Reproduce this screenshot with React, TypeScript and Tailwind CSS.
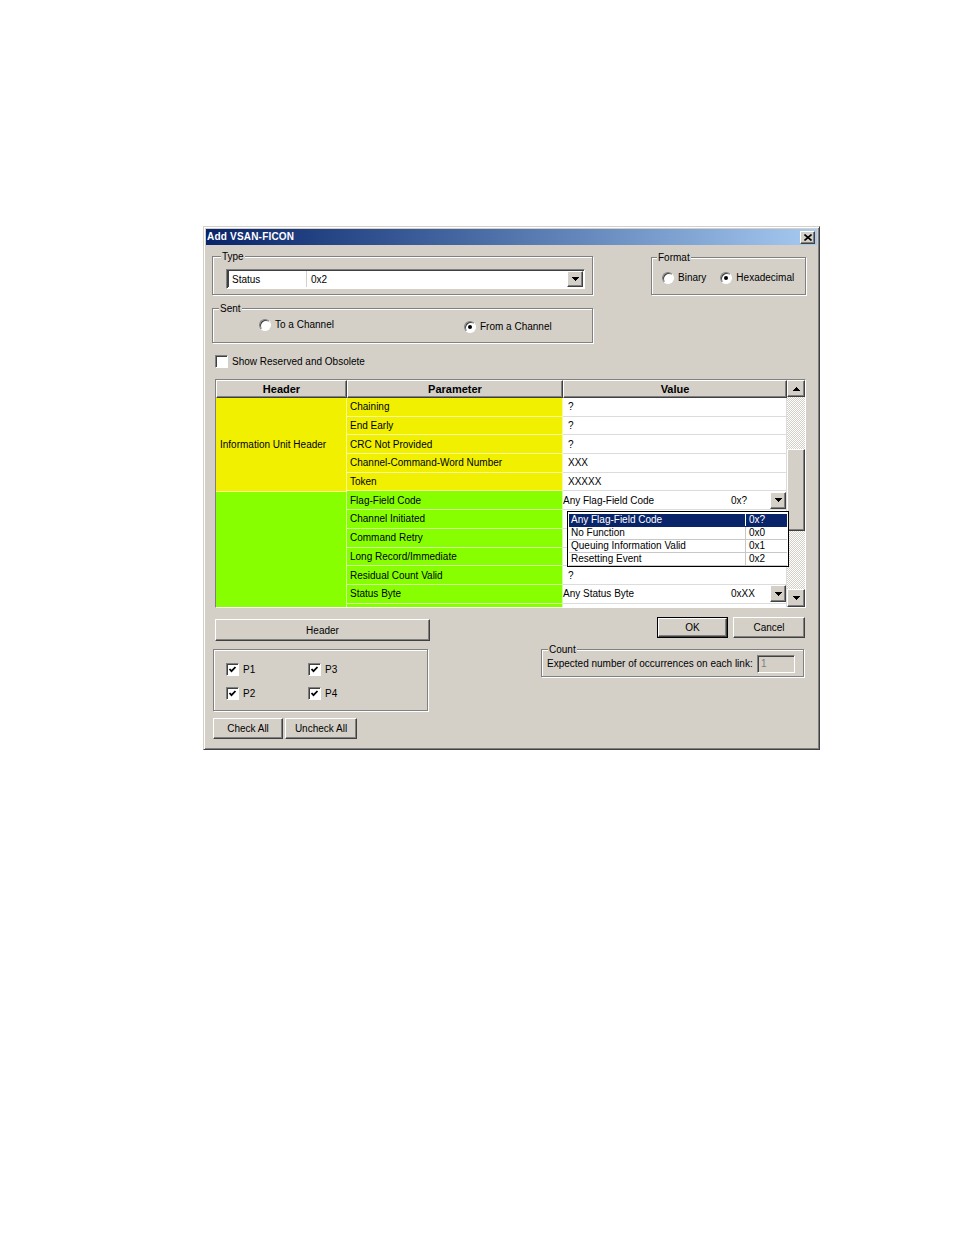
import React from "react";

const raised =
  "border border-t-white border-l-white border-r-[#404040] border-b-[#404040] shadow-[inset_-1px_-1px_0_#808080] bg-[#d4d0c8]";
const sunken =
  "border border-t-[#808080] border-l-[#808080] border-r-white border-b-white shadow-[inset_1px_1px_0_#404040]";

function Down() {
  return (
    <svg width="7" height="4" viewBox="0 0 7 4" shapeRendering="crispEdges">
      <path d="M0 0H7V1H6V2H5V3H4V4H3V3H2V2H1V1H0Z" fill="black" />
    </svg>
  );
}
function Up() {
  return (
    <svg width="7" height="4" viewBox="0 0 7 4" shapeRendering="crispEdges">
      <path d="M3 0H4V1H5V2H6V3H7V4H0V3H1V2H2V1H3Z" fill="black" />
    </svg>
  );
}

function Group({
  label,
  labelLeft,
  className,
  children,
}: {
  label: string;
  labelLeft: string;
  className: string;
  children?: React.ReactNode;
}) {
  return (
    <div
      className={`relative border border-[#808080] shadow-[1px_1px_0_#fff,inset_1px_1px_0_#fff] ${className}`}
    >
      <span
        className={`absolute -top-[7px] ${labelLeft} bg-[#d4d0c8] px-[1px] leading-[13px]`}
      >
        {label}
      </span>
      {children}
    </div>
  );
}

function Radio({ checked, label }: { checked?: boolean; label: string }) {
  return (
    <div className="flex items-center">
      <div className="relative w-[12px] h-[12px] rounded-full border border-t-[#808080] border-l-[#808080] border-r-white border-b-white bg-white shadow-[inset_1px_1px_0_#404040] flex items-center justify-center">
        {checked && <div className="w-[4px] h-[4px] rounded-full bg-black" />}
      </div>
      <span className="ml-[4px] leading-[13px]">{label}</span>
    </div>
  );
}

function Check({ checked, label }: { checked?: boolean; label: string }) {
  return (
    <div className="flex items-center">
      <div
        className={`w-[13px] h-[13px] bg-white ${sunken} flex items-center justify-center`}
      >
        {checked && (
          <svg width="9" height="9" viewBox="0 0 9 9">
            <polyline
              points="1.5,4 3.5,6.2 7.5,2"
              fill="none"
              stroke="black"
              strokeWidth="1.8"
            />
          </svg>
        )}
      </div>
      <span className="ml-[4px] leading-[13px]">{label}</span>
    </div>
  );
}

const yellowRows = [
  { p: "Chaining", v: "?" },
  { p: "End Early", v: "?" },
  { p: "CRC Not Provided", v: "?" },
  { p: "Channel-Command-Word Number", v: "XXX" },
  { p: "Token", v: "XXXXX" },
];
const greenRows: { p: string; v?: string; combo?: [string, string] }[] = [
  { p: "Flag-Field Code", combo: ["Any Flag-Field Code", "0x?"] },
  { p: "Channel Initiated", v: "" },
  { p: "Command Retry", v: "" },
  { p: "Long Record/Immediate", v: "" },
  { p: "Residual Count Valid", v: "?" },
  { p: "Status Byte", combo: ["Any Status Byte", "0xXX"] },
  { p: "", v: "" },
];

const popupItems = [
  ["Any Flag-Field Code", "0x?"],
  ["No Function", "0x0"],
  ["Queuing Information Valid", "0x1"],
  ["Resetting Event", "0x2"],
];

function HeadCell({ w, children }: { w: string; children: React.ReactNode }) {
  return (
    <div
      className={`${w} h-[18px] shrink-0 ${raised} flex items-center justify-center font-bold text-[11px]`}
    >
      {children}
    </div>
  );
}

export default function App() {
  return (
    <div className="w-[954px] min-h-[1235px] bg-white pt-[226px] pl-[203px] font-['Liberation_Sans',Arial,sans-serif] text-[10px] text-black">
      <div className="w-[617px] h-[524px] bg-[#d4d0c8] border border-t-[#d4d0c8] border-l-[#d4d0c8] border-r-[#404040] border-b-[#404040] shadow-[inset_1px_1px_0_#fff,inset_-1px_-1px_0_#808080] p-[2px] flex flex-col">
        {/* Title bar */}
        <div className="h-[16px] shrink-0 bg-gradient-to-r from-[#0a246a] to-[#a6caf0] flex items-center justify-between pl-[1px] pr-[2px]">
          <span className="text-white font-bold text-[10px] tracking-[0.2px] leading-[16px]">
            Add VSAN-FICON
          </span>
          <div
            className={`w-[15px] h-[13px] ${raised} flex items-center justify-center`}
          >
            <svg width="8" height="7" viewBox="0 0 8 7">
              <path
                d="M0.5 0.5L7.5 6.5M7.5 0.5L0.5 6.5"
                stroke="black"
                strokeWidth="1.6"
              />
            </svg>
          </div>
        </div>

        {/* Row 1 */}
        <div className="flex items-start mt-[11px]">
          <Group
            label="Type"
            labelLeft="left-[8px]"
            className="ml-[6px] w-[381px] h-[39px] pl-[13px] pt-[12px]"
          >
            <div
              className={`w-[359px] h-[20px] bg-white ${sunken} p-[1px] flex items-stretch`}
            >
              <div className="w-[79px] border-l border-[#404040] border-r border-r-[#d4d0c8] flex items-center pl-[3px]">
                Status
              </div>
              <div className="flex-1 flex items-center pl-[4px]">0x2</div>
              <div
                className={`w-[16px] h-[16px] ${raised} flex items-center justify-center`}
              >
                <Down />
              </div>
            </div>
          </Group>
          <Group
            label="Format"
            labelLeft="left-[5px]"
            className="ml-[58px] mt-[1px] w-[155px] h-[38px] pl-[10px] pt-[13px]"
          >
            <div className="flex items-center">
              <Radio label="Binary" />
              <div className="ml-[14px]">
                <Radio checked label="Hexadecimal" />
              </div>
            </div>
          </Group>
        </div>

        {/* Row 2 */}
        <Group
          label="Sent"
          labelLeft="left-[6px]"
          className="mt-[13px] ml-[6px] w-[381px] h-[35px] pl-[46px] pt-[9px]"
        >
          <div className="flex items-start">
            <div className="w-[205px]">
              <Radio label="To a Channel" />
            </div>
            <div className="mt-[2px]">
              <Radio checked label="From a Channel" />
            </div>
          </div>
        </Group>

        {/* Row 3 */}
        <div className="mt-[12px] ml-[9px]">
          <Check label="Show Reserved and Obsolete" />
        </div>

        {/* Table */}
        <div
          className={`relative mt-[11px] ml-[9px] w-[591px] h-[229px] shrink-0 ${sunken} bg-[#d4d0c8] flex`}
        >
          <div className="w-[571px] h-[227px] overflow-hidden flex">
            {/* Header column */}
            <div className="w-[131px] flex flex-col">
              <HeadCell w="w-[131px]">Header</HeadCell>
              <div className="h-[93.5px] shrink-0 bg-[#f0f000] border-r border-b border-white/60 flex items-center pl-[4px]">
                Information Unit Header
              </div>
              <div className="flex-1 bg-[#88ff00] border-r border-white/60" />
            </div>
            {/* Parameter column */}
            <div className="w-[216px] flex flex-col">
              <HeadCell w="w-[216px]">Parameter</HeadCell>
              {yellowRows.map((r) => (
                <div
                  key={r.p}
                  className="h-[18.7px] shrink-0 bg-[#f0f000] border-r border-b border-white/60 flex items-center pl-[3px]"
                >
                  {r.p}
                </div>
              ))}
              {greenRows.map((r, i) => (
                <div
                  key={i}
                  className="h-[18.7px] shrink-0 bg-[#88ff00] border-r border-b border-white/60 flex items-center pl-[3px]"
                >
                  {r.p}
                </div>
              ))}
            </div>
            {/* Value column */}
            <div className="w-[224px] flex flex-col">
              <HeadCell w="w-[224px]">Value</HeadCell>
              {[...yellowRows, ...greenRows].map((r, i) => (
                <div
                  key={i}
                  className="h-[18.7px] shrink-0 bg-white border-b border-r border-[#dcdcdc] flex items-center"
                >
                  {"combo" in r && r.combo ? (
                    <>
                      <span className="w-[168px]">{r.combo[0]}</span>
                      <span>{r.combo[1]}</span>
                      <div
                        className={`ml-auto w-[16px] h-[17px] ${raised} flex items-center justify-center`}
                      >
                        <Down />
                      </div>
                    </>
                  ) : (
                    <span className="pl-[5px]">{r.v}</span>
                  )}
                </div>
              ))}
            </div>
          </div>
          {/* Scrollbar */}
          <div className="w-[18px] h-[227px] flex flex-col">
            <div
              className={`h-[17px] shrink-0 ${raised} flex items-center justify-center`}
            >
              <Up />
            </div>
            <div className="h-[52px] shrink-0 bg-[image:repeating-conic-gradient(#d4d0c8_0%_25%,#ffffff_0%_50%)] bg-[length:2px_2px]" />
            <div className={`h-[82px] shrink-0 ${raised}`} />
            <div className="flex-1 bg-[image:repeating-conic-gradient(#d4d0c8_0%_25%,#ffffff_0%_50%)] bg-[length:2px_2px]" />
            <div
              className={`h-[18px] shrink-0 ${raised} flex items-center justify-center`}
            >
              <Down />
            </div>
          </div>

          {/* Dropdown popup */}
          <div className="absolute left-[351px] top-[131px] w-[222px] h-[56px] bg-white border border-black pt-[2px] px-[1px]">
            {popupItems.map(([a, b], i) => (
              <div
                key={a}
                className={`flex h-[13px] leading-[12px] border-b ${
                  i === 0
                    ? "bg-[#0a246a] text-white border-[#0a246a]"
                    : "border-[#c8c8c8]"
                }`}
              >
                <div className="w-[176px] pl-[2px]">{a}</div>
                <div
                  className={`flex-1 border-l pl-[3px] ${
                    i === 0 ? "border-white" : "border-[#c8c8c8]"
                  }`}
                >
                  {b}
                </div>
              </div>
            ))}
          </div>
        </div>

        {/* Bottom area */}
        <div className="flex items-start">
          <div className="ml-[7px] w-[217px] flex flex-col">
            <div
              className={`ml-[2px] mt-[11px] w-[215px] h-[22px] ${raised} flex items-center justify-center`}
            >
              Header
            </div>
            <Group
              label=""
              labelLeft="left-[6px] hidden"
              className="mt-[8px] w-[215px] h-[62px] pl-[12px] pt-[13px]"
            >
              <div className="grid grid-cols-[82px_82px] gap-y-[11px]">
                <Check checked label="P1" />
                <Check checked label="P3" />
                <Check checked label="P2" />
                <Check checked label="P4" />
              </div>
            </Group>
            <div className="mt-[7px] flex">
              <div
                className={`w-[70px] h-[21px] ${raised} flex items-center justify-center`}
              >
                Check All
              </div>
              <div
                className={`ml-[2px] w-[72px] h-[21px] ${raised} flex items-center justify-center`}
              >
                Uncheck All
              </div>
            </div>
          </div>

          <div className="ml-[111px] w-[264px] flex flex-col">
            <div className="mt-[9px] flex pl-[116px] gap-[5px]">
              <div className="w-[71px] h-[21px] border border-black">
                <div
                  className={`w-full h-full ${raised} flex items-center justify-center`}
                >
                  OK
                </div>
              </div>
              <div
                className={`w-[72px] h-[21px] ${raised} flex items-center justify-center`}
              >
                Cancel
              </div>
            </div>
            <Group
              label="Count"
              labelLeft="left-[6px]"
              className="mt-[11px] w-[263px] h-[28px]"
            >
              <div className="h-full flex items-center justify-between pl-[5px] pr-[8px] pt-[1px]">
                <span>Expected number of occurrences on each link:</span>
                <div
                  className={`w-[38px] h-[18px] bg-[#d4d0c8] ${sunken} flex items-center pl-[3px] text-[#808080]`}
                >
                  1
                </div>
              </div>
            </Group>
          </div>
        </div>
      </div>
    </div>
  );
}
